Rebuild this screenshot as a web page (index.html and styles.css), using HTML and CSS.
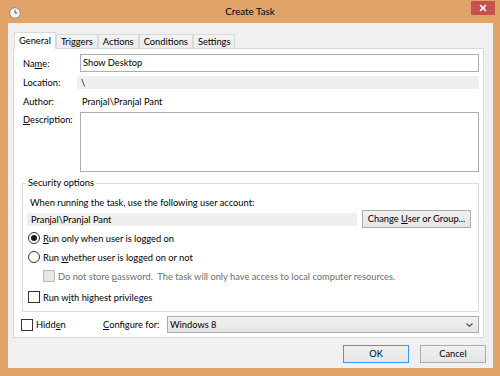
FILE: index.html
```html
<!DOCTYPE html>
<html lang="en">
<head>
    <meta charset="UTF-8">
    <meta name="viewport" content="width=device-width, initial-scale=1.0">
    <title>Create Task</title>
    <link rel="stylesheet" href="styles.css">
</head>
<body>
    <div class="window">
        <div class="titlebar">
            <div class="title-left">
                <svg class="app-icon" width="12" height="12" viewBox="0 0 12 12">
                    <circle cx="6" cy="6" r="5.3" fill="#f6f6f6" stroke="#8c8c8c"/>
                    <path d="M6 2.8V6h2.4" fill="none" stroke="#555" stroke-width="1"/>
                </svg>
            </div>
            <div class="title">Create Task</div>
            <div class="title-right">
                <div class="btn-close">
                    <svg width="8" height="8" viewBox="0 0 8 8"><path d="M1 1L7 7M7 1L1 7" stroke="#fff" stroke-width="1.6"/></svg>
                </div>
            </div>
        </div>

        <div class="client">
            <div class="tabs">
                <div class="tab tab-active">General</div>
                <div class="tab">Triggers</div>
                <div class="tab">Actions</div>
                <div class="tab">Conditions</div>
                <div class="tab">Settings</div>
            </div>

            <div class="panel">
                <div class="row">
                    <span class="lbl">Na<u>m</u>e:</span>
                    <div class="textbox">Show Desktop</div>
                </div>
                <div class="row row-location">
                    <span class="lbl">Location:</span>
                    <div class="readonly">\</div>
                </div>
                <div class="row row-author">
                    <span class="lbl">Author:</span>
                    <div class="plain">Pranjal\Pranjal Pant</div>
                </div>
                <div class="row row-desc">
                    <span class="lbl"><u>D</u>escription:</span>
                    <div class="textarea"></div>
                </div>

                <fieldset class="group">
                    <legend>Security options</legend>
                    <div class="group-text">When running the task, use the following user account:</div>
                    <div class="user-row">
                        <div class="user-field">Pranjal\Pranjal Pant</div>
                        <div class="button btn-user">Change <u>U</u>ser or Group...</div>
                    </div>
                    <div class="option opt-first">
                        <span class="radio checked"></span>
                        <span class="opt-label"><u>R</u>un only when user is logged on</span>
                    </div>
                    <div class="option opt-next">
                        <span class="radio"></span>
                        <span class="opt-label">Run <u>w</u>hether user is logged on or not</span>
                    </div>
                    <div class="option opt-next opt-sub">
                        <span class="checkbox disabled"></span>
                        <span class="opt-label text-disabled">Do not store <u>p</u>assword.&nbsp; The task will only have access to local computer resources.</span>
                    </div>
                    <div class="option opt-last">
                        <span class="checkbox"></span>
                        <span class="opt-label">Run w<u>i</u>th highest privileges</span>
                    </div>
                </fieldset>

                <div class="bottom-row">
                    <div class="option">
                        <span class="checkbox"></span>
                        <span class="opt-label">Hidd<u>e</u>n</span>
                    </div>
                    <span><u>C</u>onfigure for:</span>
                    <div class="combo">
                        <span>Windows 8</span>
                        <svg width="7" height="4" viewBox="0 0 7 4"><path d="M0.5 0.5L3.5 3.3L6.5 0.5" fill="none" stroke="#444" stroke-width="1.1"/></svg>
                    </div>
                </div>
            </div>

            <div class="buttons">
                <div class="button btn-default">OK</div>
                <div class="button">Cancel</div>
            </div>
        </div>
    </div>
</body>
</html>
```

FILE: styles.css
```css
* {
    box-sizing: border-box;
}
body {
    margin: 0;
    font-family: Lato, "Segoe UI", sans-serif;
    font-size: 9.3px;
    color: #000;
}
.window {
    width: 500px;
    height: 376px;
    background-color: #e2a368;
}

/* barra de titulo */
.titlebar {
    height: 23px;
    display: grid;
    grid-template-columns: 1fr auto 1fr;
}
.title-left {
    padding: 7px 0 0 9px;
}
.app-icon {
    display: block;
}
.title {
    line-height: 23px;
    font-size: 9.8px;
    color: #000;
}
.title-right {
    display: flex;
    justify-content: flex-end;
    align-items: flex-start;
    padding: 1px 5px 0 0;
}
.btn-close {
    width: 24px;
    height: 14px;
    background-color: #c75050;
    display: flex;
    align-items: center;
    justify-content: center;
}
.btn-close svg {
    display: block;
}

/* area do cliente */
.client {
    margin: 0 7px 0 8px;
    height: 345px;
    background-color: #f0f0f0;
    padding: 9px 9px 0 5px;
}
.tabs {
    display: flex;
    align-items: flex-end;
    height: 16px;
    padding-left: 1px;
}
.tab {
    position: relative;
    height: 14px;
    line-height: 13px;
    padding: 0 4px;
    border: 1px solid #d9d9d9;
    border-bottom: none;
    background: linear-gradient(#f3f3f3, #ebebeb);
}
.tab-active {
    height: 17px;
    margin-bottom: -1px;
    padding: 0 4px;
    line-height: 15px;
    background: #fff;
    z-index: 1;
}
.panel {
    height: 290px;
    background-color: #fff;
    border: 1px solid #d9d9d9;
    padding: 5px 4px 0 9px;
}
.row {
    display: flex;
    align-items: center;
}
.lbl {
    width: 57px;
    flex: none;
}
.textbox {
    flex: 1;
    height: 18px;
    border: 1px solid #abadb3;
    padding-left: 2px;
    line-height: 16px;
}
.row-location {
    margin-top: 4px;
    height: 13px;
}
.readonly {
    flex: 1;
    height: 13px;
    margin-left: -3px;
    padding-left: 4px;
    line-height: 13px;
    background-color: #efefef;
}
.row-author {
    margin-top: 5px;
    height: 14px;
}
.plain {
    padding-left: 2px;
}
.row-desc {
    margin-top: 4px;
    align-items: flex-start;
}
.row-desc .lbl {
    line-height: 16px;
}
.textarea {
    flex: 1;
    height: 60px;
    border: 1px solid #abadb3;
}

/* grupo de seguranca */
.group {
    margin: 3px 0 0 -1px;
    padding: 0 7px 6px 4px;
    border: 1px solid #dcdcdc;
    min-width: 0;
}
.group legend {
    margin-left: -1px;
    padding: 0 2px;
    line-height: 16px;
}
.group-text {
    margin: 4px 0 0 3px;
    line-height: 15px;
}
.user-row {
    display: flex;
    align-items: center;
    gap: 5px;
    height: 18px;
}
.user-field {
    width: 330px;
    height: 13px;
    padding-left: 4px;
    line-height: 13px;
    background-color: #efefef;
}
.button {
    height: 18px;
    border: 1px solid #acacac;
    background: linear-gradient(#f0f0f0, #e5e5e5);
    text-align: center;
    line-height: 16px;
}
.btn-user {
    width: 109px;
}
.option {
    display: flex;
    align-items: center;
    height: 16px;
}
.opt-first {
    margin-top: 2px;
}
.opt-next {
    margin-top: 3px;
}
.opt-last {
    margin-top: 5px;
}
.opt-sub {
    padding-left: 15px;
}
.opt-label {
    margin-left: 3px;
}
.radio, .checkbox {
    width: 12px;
    height: 12px;
    margin-left: 1px;
    border: 1px solid #333;
    background-color: #fff;
    flex: none;
}
.radio {
    border-radius: 50%;
    padding: 2px;
}
.radio.checked::after {
    content: "";
    display: block;
    width: 6px;
    height: 6px;
    border-radius: 50%;
    background-color: #1b1b1b;
}
.checkbox.disabled {
    border-color: #bcbcbc;
    background-color: #e6e6e6;
}
.text-disabled {
    color: #6d6d6d;
}

/* linha de baixo */
.bottom-row {
    display: grid;
    grid-template-columns: 83px 64px 1fr;
    align-items: center;
    height: 17px;
    margin: 4px 0 0 -3px;
}
.combo {
    height: 17px;
    border: 1px solid #acacac;
    background: linear-gradient(#f2f2f2, #e5e5e5);
    display: flex;
    align-items: center;
    justify-content: space-between;
    padding: 0 5px 0 2px;
}
.combo svg {
    display: block;
}
.buttons {
    display: flex;
    justify-content: flex-end;
    gap: 11px;
    margin: 7px -2px 0 0;
}
.buttons .button {
    width: 66px;
}
.btn-default {
    border-color: #3399ff;
}
```
